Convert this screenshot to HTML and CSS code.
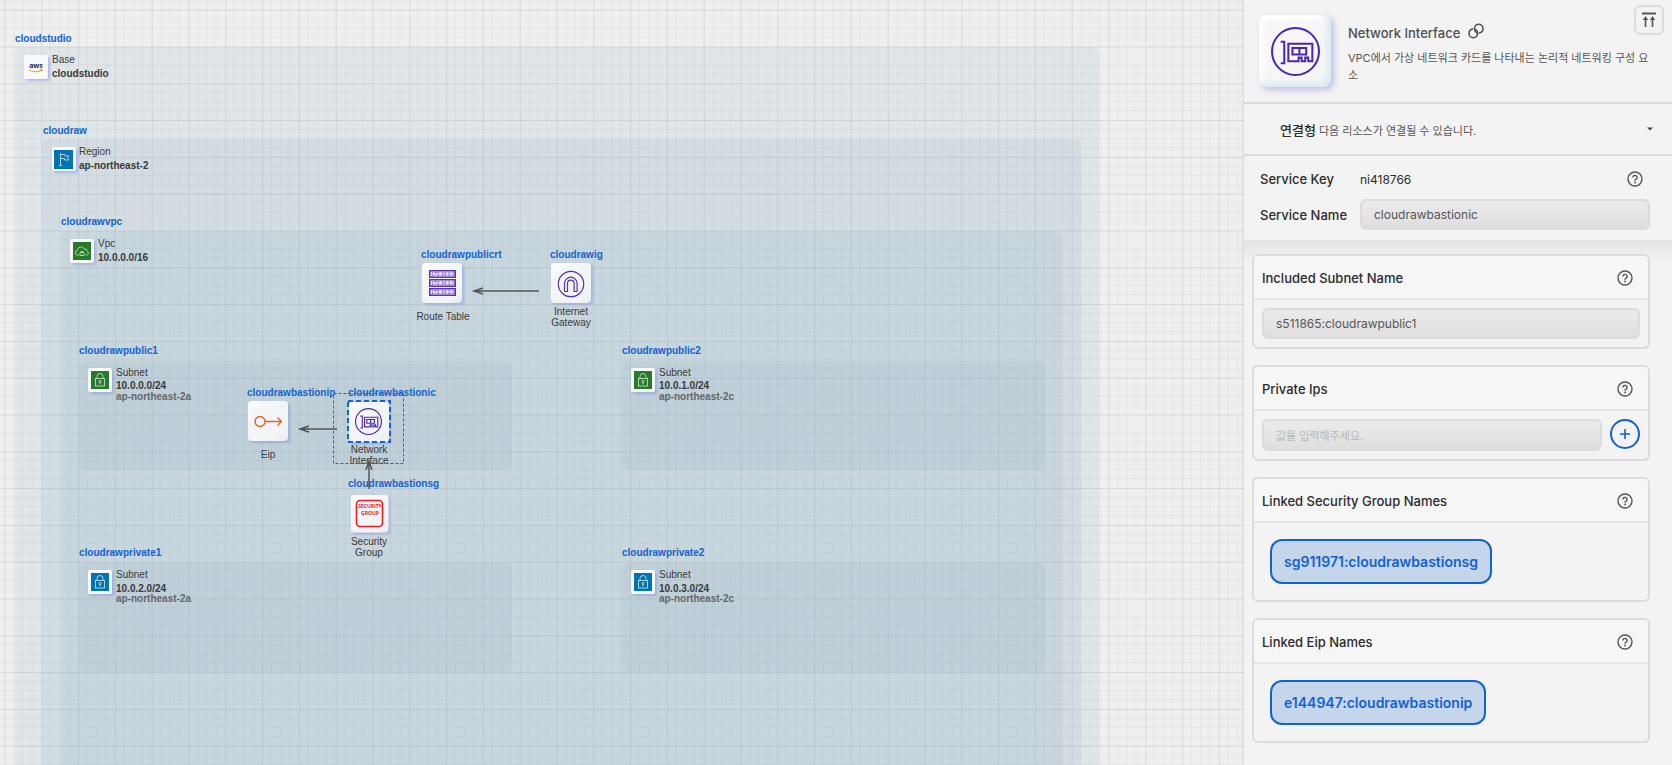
FILE: index.html
```html
<!DOCTYPE html>
<html lang="ko">
<head>
<meta charset="utf-8">
<title>cloudstudio</title>
<link rel="stylesheet" href="styles.css">
</head>
<body>
<svg class="sprite" aria-hidden="true">
  <defs>
    <pattern id="grid" width="40" height="40" patternUnits="userSpaceOnUse" patternTransform="translate(4.5 9.7) scale(.92)">
      <path class="grid-minor" d="M10 0V40M20 0V40M30 0V40M0 10H40M0 20H40M0 30H40"/>
      <path class="grid-major" d="M0.5 0V40M0 0.5H40"/>
    </pattern>
    <filter id="tile-shadow" x="-20%" y="-20%" width="150%" height="150%">
      <feDropShadow dx="2" dy="2" stdDeviation="1" flood-color="#8c96dc" flood-opacity=".55"/>
    </filter>
    <linearGradient id="tile-fill" x1="0" y1="0" x2="1" y2="1">
      <stop offset="0" stop-color="#fff"/><stop offset=".25" stop-color="#f5f6f7"/><stop offset=".8" stop-color="#f1f3f5"/><stop offset="1" stop-color="#e3edf3"/>
    </linearGradient>
    <symbol id="tile" viewBox="0 0 48 48"><rect width="40" height="40" rx="4" fill="url(#tile-fill)" filter="url(#tile-shadow)"/></symbol>
    <symbol id="tile-small" viewBox="0 0 30 30"><rect width="24" height="24" rx="2" fill="#f8f9fb" filter="url(#tile-shadow)"/></symbol>
    <symbol id="lock" viewBox="0 0 18 18">
      <g fill="none" stroke="#d5e6e2" stroke-width=".8"><rect x="4.5" y="7.5" width="9" height="7.5"/><path d="M6 7.5V5.5a3 3 0 0 1 6 0v2M9 11.5v1.8"/><circle cx="9" cy="10.5" r="1.1"/></g>
    </symbol>
    <symbol id="nic" viewBox="0 0 48 48">
      <g fill="none" stroke="#4d27aa" stroke-width="2"><circle cx="24" cy="24" r="23"/><path d="M9.500 14.500H13v21H9.500M17 16.500h23.500v17h-4V30h-3v3.500H30V30h-3v3.500H17z"/><path d="M21 20.500h13.500V27H21zM27.800 20.500V27"/></g>
    </symbol>
    <symbol id="help" viewBox="0 0 16 16">
      <g fill="none" stroke="#555" stroke-width="1.4"><circle cx="8" cy="8" r="7"/><path d="M5.900 6.500a2.100 2.100 0 1 1 3.300 1.700c-.8.5-1.200.8-1.200 1.500"/></g><circle cx="8" cy="11.500" r=".9" fill="#555"/>
    </symbol>
  </defs>
</svg>

<div class="app">
  <main class="canvas" aria-label="Architecture">
    <svg class="diagram">
      <rect width="100%" height="100%" fill="url(#grid)"/>

      <g class="zones">
        <rect x="15" y="47" width="1084" height="900" rx="6"/>
        <rect x="42" y="139" width="1039" height="800" rx="6"/>
        <rect x="61" y="231" width="1001" height="700" rx="6"/>
        <rect x="79" y="361" width="433" height="109" rx="6"/>
        <rect x="622" y="361" width="423" height="109" rx="6"/>
        <rect x="79" y="563" width="433" height="109" rx="6"/>
        <rect x="622" y="563" width="423" height="109" rx="6"/>
      </g>

      <g class="zone-label">
        <text class="name" x="15" y="42">cloudstudio</text>
        <use href="#tile-small" x="24" y="55" width="30" height="30"/>
        <text class="aws" x="36" y="68">aws</text>
        <path d="M29 70q7 3.500 13 .2M40 69.500l2.300.2-.6 2" fill="none" stroke="#f90" stroke-width="1"/>
        <text x="52" y="63">Base</text><text class="strong" x="52" y="77">cloudstudio</text>
      </g>
      <g class="zone-label">
        <text class="name" x="43" y="134">cloudraw</text>
        <use href="#tile-small" x="52" y="147" width="30" height="30"/>
        <rect x="54" y="150" width="19" height="19" fill="#0073b1"/>
        <path d="M60.500 153.500v12M59 165.500h3M60.500 154.500h4.500v1.500h4l-1.500 2 1.500 2h-4.500v-1.500h-4" fill="none" stroke="#b9dcec" stroke-width=".9"/>
        <text x="79" y="155">Region</text><text class="strong" x="79" y="169">ap-northeast-2</text>
      </g>
      <g class="zone-label">
        <text class="name" x="61" y="225">cloudrawvpc</text>
        <use href="#tile-small" x="70" y="239" width="30" height="30"/>
        <rect x="73" y="242" width="18" height="18" fill="#277b28"/>
        <path d="M79 255h-1.500a2.200 2.200 0 0 1-.3-4.400 3.800 3.800 0 0 1 7.200-1.500 2.300 2.300 0 0 1 2.800 2.100 2 2 0 0 1-.4 3.800h-1.500M80 252.500h4v3h-4zM81 252.500v-1h2v1" fill="none" stroke="#b5dcb5" stroke-width=".9"/>
        <text x="98" y="247">Vpc</text><text class="strong" x="98" y="261">10.0.0.0/16</text>
      </g>
      <g class="zone-label">
        <text class="name" x="79" y="354">cloudrawpublic1</text>
        <use href="#tile-small" x="88" y="368" width="30" height="30"/>
        <rect x="91" y="371" width="18" height="18" fill="#277b28"/><use href="#lock" x="91" y="371" width="18" height="18"/>
        <text x="116" y="376">Subnet</text><text class="strong" x="116" y="389">10.0.0.0/24</text><text class="zone" x="116" y="400">ap-northeast-2a</text>
      </g>
      <g class="zone-label">
        <text class="name" x="622" y="354">cloudrawpublic2</text>
        <use href="#tile-small" x="631" y="368" width="30" height="30"/>
        <rect x="634" y="371" width="18" height="18" fill="#277b28"/><use href="#lock" x="634" y="371" width="18" height="18"/>
        <text x="659" y="376">Subnet</text><text class="strong" x="659" y="389">10.0.1.0/24</text><text class="zone" x="659" y="400">ap-northeast-2c</text>
      </g>
      <g class="zone-label">
        <text class="name" x="79" y="556">cloudrawprivate1</text>
        <use href="#tile-small" x="88" y="570" width="30" height="30"/>
        <rect x="91" y="573" width="18" height="18" fill="#0073b1"/><use href="#lock" x="91" y="573" width="18" height="18"/>
        <text x="116" y="578">Subnet</text><text class="strong" x="116" y="592">10.0.2.0/24</text><text class="zone" x="116" y="602">ap-northeast-2a</text>
      </g>
      <g class="zone-label">
        <text class="name" x="622" y="556">cloudrawprivate2</text>
        <use href="#tile-small" x="631" y="570" width="30" height="30"/>
        <rect x="634" y="573" width="18" height="18" fill="#0073b1"/><use href="#lock" x="634" y="573" width="18" height="18"/>
        <text x="659" y="578">Subnet</text><text class="strong" x="659" y="592">10.0.3.0/24</text><text class="zone" x="659" y="602">ap-northeast-2c</text>
      </g>

      <g class="node">
        <text class="name" x="421" y="258">cloudrawpublicrt</text>
        <use href="#tile" x="422" y="263" width="48" height="48"/>
        <path d="M429 270h27v8h-27zM429 279h27v8h-27zM429 288h27v8h-27z" fill="#5a30b5"/>
        <path d="M430.500 271.500h24v5h-24zM430.500 280.500h24v5h-24zM430.500 289.500h24v5h-24z" fill="#e9e4f6"/>
        <text class="route" x="443" y="276">172.16.0.0</text><text class="route" x="443" y="285">172.16.1.0</text><text class="route" x="443" y="294">172.16.2.0</text>
        <text class="caption" x="443" y="320">Route Table</text>
      </g>
      <g class="node">
        <text class="name" x="550" y="258">cloudrawig</text>
        <use href="#tile" x="551" y="263" width="48" height="48"/>
        <g fill="none" stroke="#5a30b5"><circle cx="571" cy="284" r="12.700" stroke-width="1.200"/><path stroke-width="1.200" d="M564.500 291.500v-8a6.300 6.300 0 0 1 12.600 0v8h-3v-8a3.300 3.300 0 0 0-6.600 0v8z"/></g>
        <text class="caption" x="571" y="315">Internet</text><text class="caption" x="571" y="326">Gateway</text>
      </g>
      <g class="node">
        <text class="name" x="247" y="396">cloudrawbastionip</text>
        <use href="#tile" x="248" y="401" width="48" height="48"/>
        <g fill="none" stroke="#e0662f" stroke-width="1.400"><circle cx="260" cy="421.500" r="5"/><path d="M265 421.500h16M277.500 417.500l4 4-4 4"/></g>
        <text class="caption" x="268" y="458">Eip</text>
      </g>
      <g class="node">
        <text class="name" x="348" y="396">cloudrawbastionic</text>
        <use href="#tile" x="349" y="402" width="48" height="48"/>
        <use href="#nic" x="355" y="408" width="27" height="27"/>
        <text class="caption" x="369" y="453">Network</text><text class="caption" x="369" y="464">Interface</text>
      </g>
      <g class="node">
        <text class="name" x="348" y="487">cloudrawbastionsg</text>
        <use href="#tile" x="351" y="495" width="45" height="45"/>
        <rect x="356.500" y="500.500" width="26" height="26" rx="3.500" fill="none" stroke="#e8202a" stroke-width="1.600"/>
        <text class="secure" x="370" y="508">SECURITY</text><text class="secure" x="370" y="515">GROUP</text>
        <text class="caption" x="369" y="545">Security</text><text class="caption" x="369" y="556">Group</text>
      </g>

      <g class="links">
        <path d="M539 291H474M483 288l-9 3 9 3"/>
        <path d="M337 429H300M309 426l-9 3 9 3"/>
        <path d="M369 489V461M366 470l3-9 3 9"/>
      </g>
      <rect class="selection-bounds" x="333.500" y="393.500" width="70" height="70"/>
      <rect class="selection" x="348" y="401" width="42" height="41"/>
    </svg>
  </main>

  <aside class="panel">
    <button class="to-top" type="button" aria-label="Scroll to top">
      <svg width="16" height="16" viewBox="0 0 16 16"><path d="M1 1.500h14" stroke="#555" stroke-width="2"/><path d="M4.500 15V6M11.500 15V6" stroke="#555" stroke-width="1.600"/><path d="M1.800 8l2.700-4 2.700 4zM8.800 8l2.700-4 2.700 4z" fill="#555"/></svg>
    </button>
    <header class="resource">
      <div class="resource-icon"><svg width="49" height="49"><use href="#nic" width="49" height="49"/></svg></div>
      <div class="resource-text">
        <h1>Network Interface
          <a href="#docs" aria-label="Docs"><svg width="16" height="16" viewBox="0 0 16 16"><g fill="none" stroke="#4d4d4d" stroke-width="1.500" stroke-linecap="round"><path d="M4.500 6C2.300 6.500 1 8.300 1 10.500a4.300 4.300 0 0 0 8.600 0C9.700 8.700 9 7.300 7.600 6.400"/><path d="M11.500 10C13.700 9.500 15 7.700 15 5.500a4.300 4.300 0 0 0-8.600 0C6.300 7.300 7 8.700 8.400 9.600"/></g></svg></a>
        </h1>
        <p>VPC에서 가상 네트워크 카드를 나타내는 논리적 네트워킹 구성 요소</p>
      </div>
    </header>

    <button class="connections" type="button">
      <span><strong>연결형</strong> 다음 리소스가 연결될 수 있습니다.</span>
      <svg width="6" height="4" viewBox="0 0 6 4"><path d="M0 .5h6L3 3.500z" fill="#444"/></svg>
    </button>

    <section class="service">
      <span class="label">Service Key</span>
      <span class="key">ni418766</span>
      <button class="help" type="button" aria-label="Service Key help"><svg width="16" height="16"><use href="#help"/></svg></button>
      <label class="label" for="service-name">Service Name</label>
      <input class="field service-name" id="service-name" value="cloudrawbastionic">
    </section>

    <div class="cards">
      <section class="card">
        <header><label for="subnet">Included Subnet Name</label><button class="help" type="button" aria-label="Subnet help"><svg width="16" height="16"><use href="#help"/></svg></button></header>
        <div class="card-body"><input class="field" id="subnet" value="s511865:cloudrawpublic1"></div>
      </section>
      <section class="card">
        <header><label for="ips">Private Ips</label><button class="help" type="button" aria-label="Private Ips help"><svg width="16" height="16"><use href="#help"/></svg></button></header>
        <div class="card-body"><input class="field field-tall" id="ips" placeholder="값을 입력해주세요."><button class="add" type="button" aria-label="Add"><svg width="12" height="12" viewBox="0 0 12 12"><path d="M6 1v10M1 6h10" stroke="#1262cf" stroke-width="1.600"/></svg></button></div>
      </section>
      <section class="card">
        <header><h2>Linked Security Group Names</h2><button class="help" type="button" aria-label="Security group help"><svg width="16" height="16"><use href="#help"/></svg></button></header>
        <div class="card-body linked"><button class="chip" type="button">sg911971:cloudrawbastionsg</button></div>
      </section>
      <section class="card">
        <header><h2>Linked Eip Names</h2><button class="help" type="button" aria-label="Eip help"><svg width="16" height="16"><use href="#help"/></svg></button></header>
        <div class="card-body linked"><button class="chip" type="button">e144947:cloudrawbastionip</button></div>
      </section>
    </div>
  </aside>
</div>
</body>
</html>
```
FILE: styles.css
```css
* { box-sizing: border-box; }
body {
  margin: 0;
  color: #2b2b2b;
  font-family: Inter, "Noto Sans CJK KR", sans-serif;
  font-size: 12px;
}
h1, h2, p { margin: 0; }
button, input { font: inherit; color: inherit; }
button { padding: 0; border: 0; background: none; cursor: pointer; }
svg { display: block; }
.sprite { position: absolute; width: 0; height: 0; }

.app { display: flex; height: 100vh; overflow: hidden; }

/* Canvas */
.canvas { flex: 1; min-width: 0; background: #efefef; }
.diagram { width: 100%; height: 100%; font-family: "Liberation Sans", Arial, sans-serif; font-size: 10px; fill: #3a3a3a; }
.grid-minor { stroke: #e4e4e4; stroke-width: 1; fill: none; }
.grid-major { stroke: #d6d6d6; stroke-width: 1; fill: none; }
.zones rect { fill: #8bacc2; fill-opacity: .15; }
.name { fill: #1262cf; font-weight: 700; }
.strong { font-weight: 700; }
.zone { font-weight: 700; fill: #666; }
.caption { text-anchor: middle; }
.aws { font-family: "Open Sans", sans-serif; font-size: 7px; font-weight: 700; text-anchor: middle; fill: #252f3e; }
.route { font-size: 5px; text-anchor: middle; fill: #5a30b5; }
.secure { font-family: "Open Sans", sans-serif; font-size: 5px; font-weight: 700; text-anchor: middle; fill: #e8202a; }
.links path { fill: none; stroke: #555; stroke-width: 1.5; }
.selection-bounds { fill: none; stroke: #1a6fb5; stroke-dasharray: 3 2; }
.selection { fill: none; stroke: #1262cf; stroke-width: 2; stroke-dasharray: 5 3; }

/* Panel */
.panel {
  position: relative;
  display: flex;
  flex-direction: column;
  flex: 0 0 428px;
  background: #f3f3f3;
  box-shadow: 0 0 3px rgba(0, 0, 0, .2);
}
.to-top {
  position: absolute;
  top: 5px;
  right: 8px;
  display: grid;
  place-items: center;
  width: 30px;
  height: 30px;
  border: 2px solid #dcdcdc;
  border-radius: 6px;
}
.resource { display: flex; gap: 17px; padding: 15px 16px 15px 15px; border-bottom: 2px solid #dcdcdc; }
.resource-icon {
  display: grid;
  place-items: center;
  flex: none;
  width: 72px;
  height: 72px;
  border-radius: 8px;
  background: #f6f6f6;
  box-shadow: 3px 3px 6px rgba(120, 110, 210, .4), inset -4px -4px 6px #d9e9f1, inset 4px 4px 6px #fff;
}
.resource-text { padding-top: 8px; }
.resource h1 { display: flex; gap: 8px; color: #4d4d4d; font-size: 13px; font-weight: 500; line-height: 20px; }
.resource p { margin-top: 7px; color: #555; font-size: 11px; line-height: 17px; }
.connections {
  display: flex;
  align-items: center;
  justify-content: space-between;
  height: 52px;
  padding: 0 19px 0 36px;
  border-bottom: 2px solid #dcdcdc;
  color: #555;
  font-size: 11px;
}
.connections strong { color: #2b2b2b; font-size: 13px; font-weight: 500; }
.service {
  display: grid;
  grid-template-columns: 100px 1fr auto;
  align-items: center;
  row-gap: 12px;
  padding: 15px 22px 10px 16px;
}
.label, .card label, h2 { font-size: 13px; font-weight: 500; line-height: 16px; }
.service .help { margin-right: 7px; }
.service-name { grid-column: 2 / 4; }
.help { width: 16px; height: 16px; }
.field {
  width: 100%;
  min-width: 0;
  height: 31px;
  padding: 0 12px;
  border: 2px solid #dcdcdc;
  border-radius: 6px;
  background: linear-gradient(#ebebeb, #dedede);
  color: #555;
}
.field-tall { height: 32px; }
.field::placeholder { color: #b8b8b8; font-size: 11px; opacity: 1; }
.cards {
  display: flex;
  flex: 1;
  flex-direction: column;
  gap: 16px;
  min-height: 0;
  padding: 14px 22px 14px 8px;
  overflow: hidden;
  background: linear-gradient(#e5e5e5, #f3f3f3 24px);
}
.card { flex: none; overflow: hidden; border: 2px solid #dcdcdc; border-radius: 6px; background: #f3f3f3; }
.card header {
  display: flex;
  align-items: center;
  justify-content: space-between;
  height: 44px;
  padding: 2px 15px 0 8px;
  border-bottom: 2px solid #e4e4e4;
  background: #f6f6f6;
}
.card-body { display: flex; gap: 8px; padding: 8px; }
.linked { padding: 16px; }
.add {
  display: grid;
  place-items: center;
  flex: none;
  width: 30px;
  height: 30px;
  border: 2px solid #1262cf;
  border-radius: 50%;
}
.chip {
  height: 45px;
  padding: 0 12px;
  border: 2px solid #1262cf;
  border-radius: 12px;
  background: #c5d5ea;
  color: #1262cf;
  font-size: 14px;
  font-weight: 600;
}
```
